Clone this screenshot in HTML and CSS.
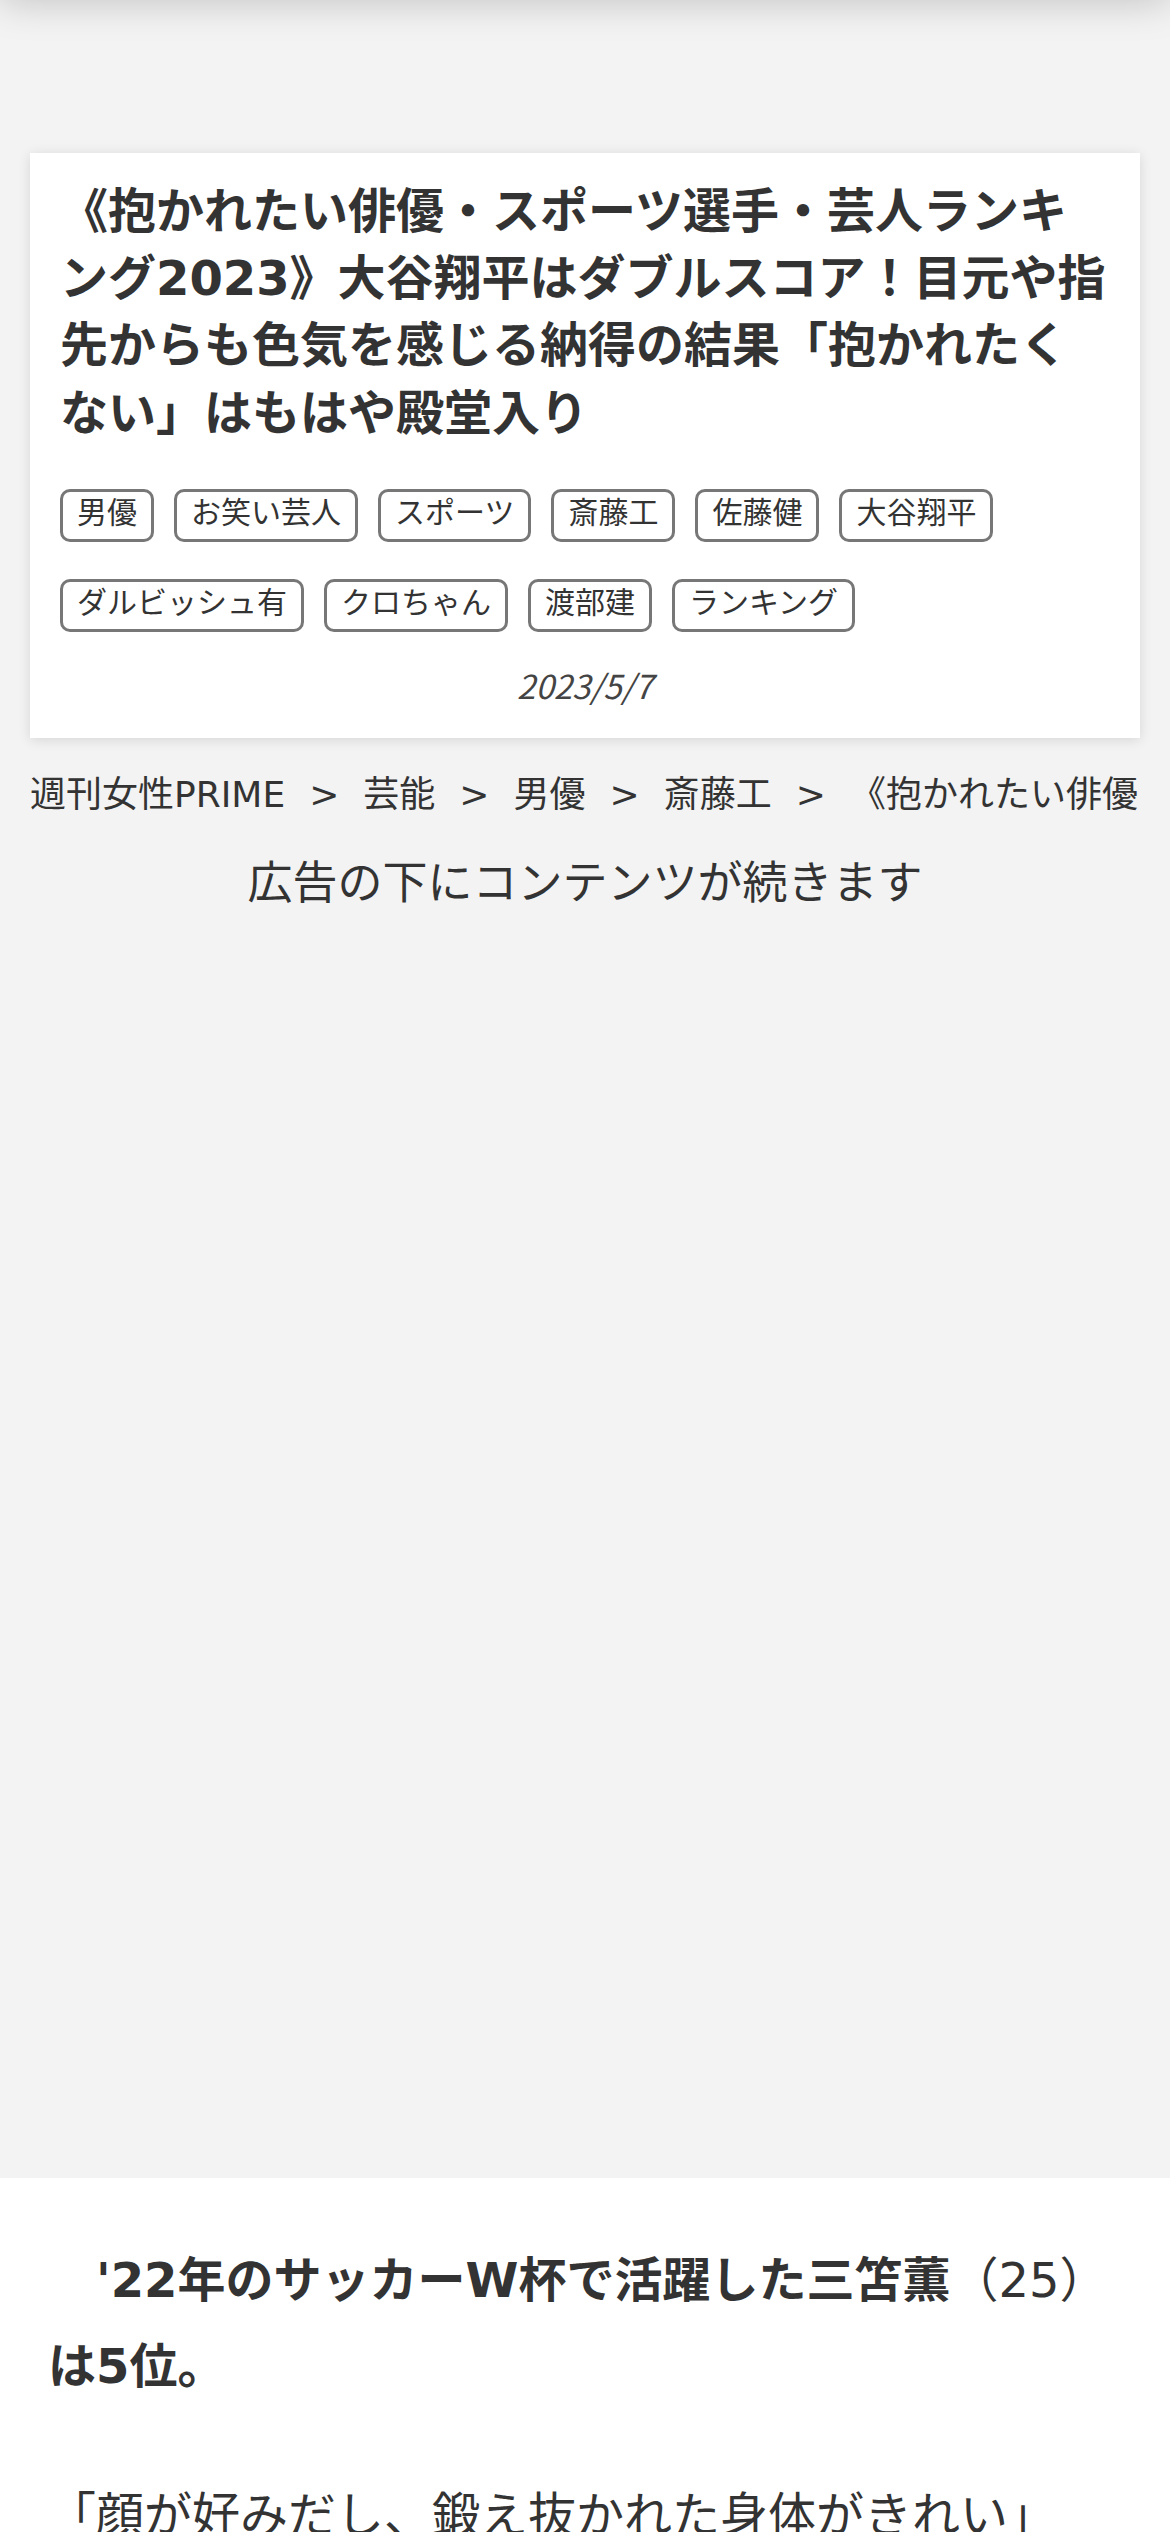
FILE: index.html
```html
<!DOCTYPE html>
<html lang="ja">
  <head>
    <meta charset="utf-8">
    <title>週刊女性PRIME</title>
    <link rel="stylesheet" href="styles.css">
  </head>
  <body>
    <div class="masthead"></div>

    <div class="card">
      <h1 class="title">《抱かれたい俳優・スポーツ選手・芸人ランキング2023》大谷翔平はダブルスコア！目元や指先からも色気を感じる納得の結果「抱かれたくない」はもはや殿堂入り</h1>
      <ul class="tags">
        <li><a href="#">男優</a></li>
        <li><a href="#">お笑い芸人</a></li>
        <li><a href="#">スポーツ</a></li>
        <li><a href="#">斎藤工</a></li>
        <li><a href="#">佐藤健</a></li>
        <li><a href="#">大谷翔平</a></li>
        <li><a href="#">ダルビッシュ有</a></li>
        <li><a href="#">クロちゃん</a></li>
        <li><a href="#">渡部建</a></li>
        <li><a href="#">ランキング</a></li>
      </ul>
      <div class="date">2023/5/7</div>
    </div>

    <div class="crumbs">
      <a href="#">週刊女性PRIME</a><span class="sep">&gt;</span><a href="#">芸能</a><span class="sep">&gt;</span><a href="#">男優</a><span class="sep">&gt;</span><a href="#">斎藤工</a><span class="sep">&gt;</span><span>《抱かれたい俳優・スポーツ選手・芸人ランキング2023》大谷翔平はダブルスコア！</span>
    </div>

    <div class="ad-label">広告の下にコンテンツが続きます</div>
    <div class="ad-slot"></div>

    <div class="article">
      <p class="indent"><b>'22年のサッカーW杯で活躍した三笘薫</b>（25）<b>は5位。</b></p>
      <p>「顔が好みだし、鍛え抜かれた身体がきれい」</p>
    </div>
  </body>
</html>
```

FILE: styles.css
```css
body {
  margin: 0;
  background-color: #f3f3f3;
  color: #333;
  font-family: "DejaVu Sans", "Noto Sans CJK JP", sans-serif;
}

a {
  color: inherit;
  text-decoration: none;
}

.masthead {
  height: 120px;
  margin-top: -120px;
  background-color: #fff;
  box-shadow: 0 0 40px rgba(0, 0, 0, .22);
}

.card {
  margin: 153px 30px 0;
  padding: 25px 30px 30px;
  background-color: #fff;
  box-shadow: 0 2px 12px rgba(0, 0, 0, .12);
}

.title {
  margin: 0;
  font-size: 48px;
  line-height: 1.4;
  font-weight: bold;
}

.tags {
  display: flex;
  flex-wrap: wrap;
  gap: 37px 20px;
  list-style: none;
  margin: 42px 0 0;
  padding: 0;
}

.tags a {
  display: block;
  padding: 0 14px 5px;
  border: solid 3px #777;
  border-radius: 10px;
  font-size: 30px;
  line-height: 42px;
}

.date {
  margin-top: 30px;
  text-align: center;
  font-family: "Noto Sans CJK JP", sans-serif;
  font-style: italic;
  font-size: 33px;
  line-height: 46px;
  color: #444;
}

.crumbs {
  margin: 30px 30px 0;
  font-size: 36px;
  line-height: 54px;
  white-space: nowrap;
  overflow: hidden;
}

.crumbs .sep {
  margin: 0 24px;
}

.ad-label {
  margin-top: 28px;
  text-align: center;
  font-size: 45px;
  line-height: 68px;
}

.ad-slot {
  height: 1260px;
}

.article {
  padding: 59px 48px 40px;
  background-color: #fff;
}

.article p {
  margin: 0 0 62px;
  font-size: 48px;
  line-height: 1.8;
}

.article p.indent {
  text-indent: 1em;
}
```
